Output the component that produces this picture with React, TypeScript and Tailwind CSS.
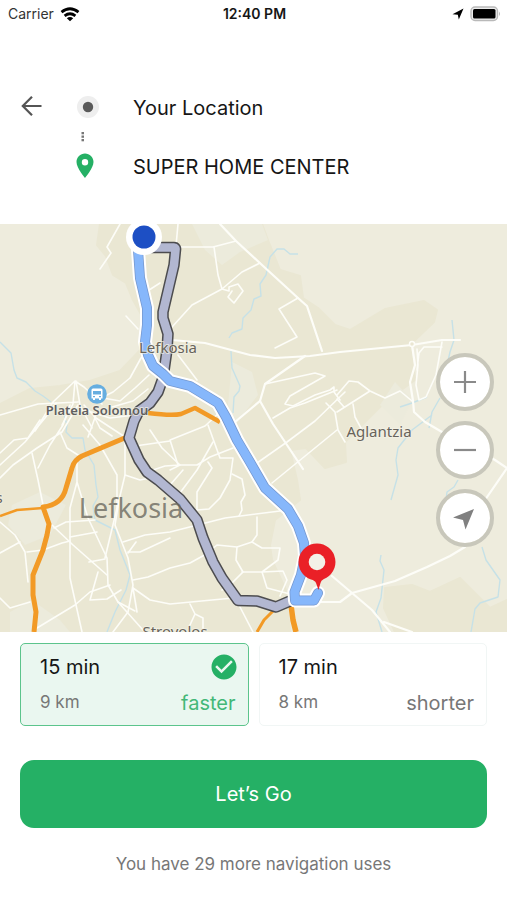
import React, { useState } from "react";
import { MdCheckCircle } from "react-icons/md";

interface RouteOption {
  id: string;
  time: string;
  distance: string;
  tag: string;
}

const ROUTES: RouteOption[] = [
  { id: "faster", time: "15 min", distance: "9 km", tag: "faster" },
  { id: "shorter", time: "17 min", distance: "8 km", tag: "shorter" },
];

// slightly darker built-up land
const LAND = [
  "M100 224L97 245L106 256L113 275L126 283L133 300L143 318L145 345L120 371L90 381L60 386L30 389L0 404V632H290L286 590L272 560L270 545L275 520L300 500L297 480L290 450L306 448L325 468L346 462L345 442L385 402L415 380L410 345L434 322L437 310L424 301L385 309L350 330L335 325L318 308L303 298L300 276L280 270L268 240L262 224Z",
  "M385 588L412 585L430 592L460 578L490 608L507 600V632H395L384 608Z",
];

// paler patches on top of the built-up land
const PATCHES = [
  "M192 224H262L268 240L240 252L222 265L205 250Z",
  "M232 362L252 372L258 395L235 425L228 405Z",
  "M12 505L40 492L66 505L50 535L25 545L8 525Z",
  "M10 612L32 600L60 620L70 632H10Z",
  "M395 382L412 400L400 425L380 405Z",
];

const STREAMS = [
  "M0 342L11 353L14 370L17 378L26 382L35 391L43 396L51 402",
  "M298 254L290 254L284 249L277 249L270 257L266 275L260 284L261 296L254 299L251 310L243 318L242 329L232 333L229 338",
  "M231 351L232 368L240 386L239 391L234 397L233 413",
  "M64 415L67 425L66 432L72 438L83 438L85 450L94 465L96 485L98 497L93 506L95 520L115 530L120 550L130 575L126 590L115 612L107 632",
  "M452 320L454 340L450 352L446 370",
  "M440 398L432 412L429 428M432 415L412 430L398 448L396 460L398 475L391 500",
  "M400 407L412 403L427 397",
  "M458 480L454 487L447 492L446 500",
  "M381 555L380 561L384 570L381 598L376 612L382 632",
  "M482 547L486 560L500 580L498 597L480 603L475 609L471 632",
];

const ROADS = [
  "M220 224L236 241L262 265L298 298L307 306L322 351",
  "M172 340L205 343L250 355L275 358L310 356L340 352L412 345L442 340L460 340",
  "M305 356L265 384L260 401L235 422",
  "M260 401L273 424L285 442L303 469",
  "M332 576L352 593L372 610L390 632M384 622L412 632",
  "M352 593L395 581L427 567L450 556L465 547",
  "M412 345L415 365L410 382L413 401L414 412L425 422L442 432L495 460L507 468L485 500",
  "M318 602H340L352 593",
];

const STREETS = [
  "M120 224L107 247L111 253L100 269",
  "M178 224L176 246M176 247H213L236 241",
  "M214 247L218 275L222 289M260 263L242 272L222 289L192 305L172 327",
  "M222 289L229 291L229 287L238 284L243 291L234 303L228 297L232 291",
  "M298 298L279 309L297 337L275 348",
  "M265 384L315 373L325 376L290 396L285 404L293 406L315 395L330 390L334 387L334 392L340 400",
  "M273 418L290 408L305 403L337 390M257 463L287 442L315 421L345 392M272 483L337 430",
  "M326 403L335 412L338 430L345 442",
  "M178 355L197 380M126 316L138 329M146 292L160 283",
  "M337 395L349 381L358 382L370 391L385 398L400 391L412 401M370 391L337 412M353 404L355 417L362 430M337 399L344 407",
  "M417 349L418 365L416 385L419 400L426 397L436 375L442 342M442 347H424L419 353L417 370",
  "M0 415L38 404L78 402M35 431L53 402L75 381L84 387L102 404M75 381L73 404L62 425M76 381L80 405L92 428",
  "M105 396L113 392L130 378L141 358L152 352M103 398L120 401L135 388L149 375M112 407L133 401L148 389",
  "M0 478L13 465L37 448L62 432L78 405M0 465L25 442L45 418L56 403M0 453L14 440L28 438L40 420M38 468L50 445L63 425L70 405",
  "M32 453L38 480L43 505M60 432L67 448L78 455M84 405L96 418L125 437M84 410L110 418L135 415",
  "M77 460V482L70 508V578L82 632M77 482L88 518L107 558L108 585L118 602L143 630",
  "M83 425L100 445L117 475V508L105 558M97 412L88 437M92 412L100 428L112 436",
  "M125 440V475L119 500L115 525L128 558L133 585L128 612L113 632M133 588L137 612",
  "M125 475L140 480L155 477M128 447L170 441",
  "M52 525L73 545L107 575M54 528L66 522L95 520M70 537L97 532M123 542L145 535L170 532L225 518L280 511",
  "M27 552L43 550L62 543L70 541M89 562L105 559M128 553L136 542",
  "M0 522L15 535L25 552L28 582M0 553L20 542M0 598L10 608L30 602M37 628L75 605L90 592L110 585",
  "M90 600L98 572M90 600L107 599L121 590M118 602L135 611",
  "M133 580L148 577L170 568L190 563L210 552M133 588L150 600L170 604L233 598M128 552L140 552L170 538",
  "M208 425L220 458H233L230 480L220 498L209 509L197 510V492L212 468L208 462",
  "M170 470L180 465L197 465L210 457L233 448M170 440L178 465M177 497L197 470L213 442M170 440L205 426L220 412",
  "M232 474L242 479L245 495L241 502L242 510L239 516",
  "M257 517V535L252 542L237 547L217 545L211 550M237 547L236 560L243 572L230 585L222 590",
  "M252 542L262 548L280 548L278 560L262 572L242 572M262 572L267 588L290 594M262 572L283 571L287 580L280 596",
  "M190 604L195 614L203 618V632M195 614L190 625M240 607L253 632",
  "M150 430L162 448L180 465M153 470L165 466L180 465M170 485L183 470",
];

const GREY_ROUTE =
  "M150 247.5H174Q176 247.500 175.500 250L174 265L163 312L163 318L168 334L167 350L163 378L158 392L150 403L139 411L134 421L129 438L139 460L147 472L158 480L180 499L197 520L203 538L213 562L222 578L238 600.500L257 601L276 607L290 601";
const BLUE_ROUTE =
  "M138 250L140 278L147 308V325L145 342L148 355L153 366L163 374L170 381L190 386L218 403L226 417L237 440L250 462L265 488L288 509L298 526L304 543L305 556L301 575L294.500 592L295 600.500H314L318 593";

function CityMap() {
  return (
    <svg
      viewBox="0 224 507 408"
      className="block w-full bg-[#eeecdd] font-['Noto_Sans',sans-serif]"
      role="img"
      aria-label="Map of Lefkosia with two routes"
    >
      <g fill="#eae7d3" stroke="#eae7d3" strokeWidth="2" strokeLinejoin="round">
        {LAND.map((d) => (
          <path key={d} d={d} />
        ))}
      </g>
      <g fill="#ecebdc">
        {PATCHES.map((d) => (
          <path key={d} d={d} />
        ))}
      </g>
      <g fill="none" stroke="#c6e1e7" strokeWidth="1.4" strokeLinejoin="round">
        {STREAMS.map((d) => (
          <path key={d} d={d} />
        ))}
      </g>
      <g fill="none" stroke="#fdfdf8" strokeLinejoin="round" strokeLinecap="round">
        {STREETS.map((d) => (
          <path key={d} d={d} strokeWidth="1.6" />
        ))}
        {ROADS.map((d) => (
          <path key={d} d={d} strokeWidth="2.2" />
        ))}
      </g>
      <circle cx="412" cy="344" r="2.5" fill="#eae6d1" stroke="#fdfdf8" strokeWidth="1.5" />

      {/* main orange roads */}
      <g fill="none" stroke="#f29a26" strokeLinejoin="round">
        <path d="M220 422L195 408L181 414Q172 416 148 413" strokeWidth="4.5" />
        <path
          d="M127 437L82 456Q74 460 72 468L66 488Q62 505 43 507L49 524L47 535L43 550L33 575V595L36 612L34 632"
          strokeWidth="5"
        />
        <path d="M0 516L17 510L43 508" strokeWidth="2.5" />
        <path d="M274 610L264 620L257 632" strokeWidth="3" />
        <path d="M291 605L293 620L296 632" strokeWidth="5.5" />
      </g>

      {/* routes */}
      <g fill="none" strokeLinejoin="round">
        <path d={GREY_ROUTE} stroke="#4c4c4f" strokeWidth="11.5" />
        <path d={GREY_ROUTE} stroke="#b2b7d1" strokeWidth="8.5" />
        <g strokeLinecap="round">
          <path d={BLUE_ROUTE} stroke="#ffffff" strokeWidth="14" />
          <path d={BLUE_ROUTE} stroke="#7597ce" strokeWidth="10" />
          <path d={BLUE_ROUTE} stroke="#86b7fb" strokeWidth="8.5" />
        </g>
      </g>

      {/* bus stop */}
      <circle cx="97" cy="394" r="9.8" fill="#66aee0" />
      <path
        d="M93 388.500H101Q102.500 388.500 102.500 390V398.500H101V400H99V398.500H95V400H93V398.500H91.500V390Q91.500 388.500 93 388.500ZM93 391V394.500H101V391ZM93 396V397.300H95V396ZM99 396V397.300H101V396Z"
        fill="#ffffff"
        fillRule="evenodd"
      />

      <g textAnchor="middle" fill="#67635b" strokeLinejoin="round" paintOrder="stroke">
        <text x="131" y="518" fontSize="27" fill="#6b695f" fillOpacity="0.8">
          Lefkosia
        </text>
        <g fontSize="15" stroke="#f4f2e6" strokeOpacity="0.7" strokeWidth="2">
          <text x="168" y="353">
            Lefkosia
          </text>
          <text x="379" y="437">
            Aglantzia
          </text>
          <text x="175" y="637">
            Strovolos
          </text>
          <text x="-1" y="503">
            s
          </text>
        </g>
        <text x="97" y="415" fontSize="13" fontWeight="600" fill="#5f5f60" stroke="#f4f2e6" strokeOpacity="0.7" strokeWidth="2">
          Plateia Solomou
        </text>
      </g>

      {/* start and destination */}
      <circle cx="144" cy="237" r="18" fill="#ffffff" />
      <circle cx="144" cy="237" r="11.500" fill="#1d4fc4" />
      <path
        d="M317 543.500A18.500 18.500 0 0 1 323.500 579.300Q321 580.500 320.500 583L318.500 590L316 583Q315 580.500 311 579.500A18.500 18.500 0 0 1 317 543.500Z"
        fill="#ea2027"
      />
      <circle cx="317" cy="562" r="8.300" fill="#f3f1e8" />
    </svg>
  );
}

interface MapButtonProps {
  label: string;
  children: React.ReactNode;
}

const MapButton: React.FC<MapButtonProps> = ({ label, children }) => (
  <button
    type="button"
    aria-label={label}
    className="flex h-[58px] w-[58px] cursor-pointer items-center justify-center rounded-full border-4 border-[#c8c7bb] bg-white bg-clip-padding text-[#8a8a8a]"
  >
    {children}
  </button>
);

export default function App() {
  const [selected, setSelected] = useState("faster");

  return (
    <div className="min-h-screen bg-white font-[Inter,sans-serif] text-[#161616]">
      {/* status bar */}
      <div className="grid h-7 grid-cols-3 items-center pr-1.5 pl-2 text-sm">
        <div className="flex items-center gap-1.5 text-[#333]">
          <span>Carrier</span>
          <svg viewBox="0 0 20 15" className="h-[15px] w-5" fill="none" stroke="#000" strokeWidth="2.8">
            <path d="M1.500 5.200Q10 -1.600 18.500 5.200" />
            <path d="M4.600 8.800Q10 4.600 15.400 8.800" />
            <path d="M10 14.200L6.800 11.200Q10 8.600 13.200 11.200Z" fill="#000" stroke="none" />
          </svg>
        </div>
        <span className="text-center font-semibold">12:40 PM</span>
        <div className="flex items-center justify-end gap-1.5">
          <svg viewBox="0 0 12 12" className="h-3 w-3">
            <path d="M11.500 0.500L6.800 11.500L5.800 6.800L0.500 6.200Z" fill="#000" />
          </svg>
          <svg viewBox="0 0 31 16" className="h-4 w-[31px]">
            <rect x="1" y="1" width="26.500" height="13.500" rx="4" fill="#ececec" stroke="#b9b9b9" strokeWidth="1.400" />
            <rect x="3" y="3" width="22.500" height="9.500" rx="1.500" fill="#000" />
            <path d="M29 5.500Q31 7.800 29 10Z" fill="#b9b9b9" />
          </svg>
        </div>
      </div>

      {/* from / to */}
      <header className="flex items-start px-5 pt-16 pb-[43px]">
        <button type="button" aria-label="Back" className="mt-[2px] cursor-pointer text-[#555]">
          <svg viewBox="0 0 24 24" className="h-6 w-6" fill="none" stroke="currentColor" strokeWidth="2.200">
            <path d="M21.500 12H3M12 2.700L2.800 12L12 21.300" />
          </svg>
        </button>
        <div className="ml-8 flex w-6 flex-col items-start">
          <svg viewBox="0 0 24 24" className="mt-1 h-6 w-6">
            <circle cx="12" cy="11" r="11" fill="#eeeeee" />
            <circle cx="12" cy="11" r="5.200" fill="#5a5a5a" />
          </svg>
          <svg viewBox="0 0 14 32" className="h-8 w-[14px]" fill="#777">
            <rect x="5.500" y="12" width="2.500" height="2.300" />
            <rect x="5.500" y="15.500" width="2.500" height="2.300" />
            <rect x="5.500" y="19" width="2.500" height="2.300" />
          </svg>
          <svg viewBox="0 0 18 25" className="mt-px h-[25px] w-[18px]">
            <path
              d="M9 0.500C4.300 0.500 0.500 4.200 0.500 9C0.500 15 9 25 9 25S17.500 15 17.500 9C17.500 4.200 13.700 0.500 9 0.500ZM9 6A3.200 3.200 0 1 1 9 12.400A3.200 3.200 0 1 1 9 6Z"
              fill="#25b065"
              fillRule="evenodd"
            />
          </svg>
        </div>
        <div className="ml-[33px] flex flex-col gap-[31px] pt-[2px] text-xl">
          <p>Your Location</p>
          <p>SUPER HOME CENTER</p>
        </div>
      </header>

      <main>
        <div className="relative">
          <CityMap />
          <div className="absolute top-[129px] right-[13px] flex flex-col gap-[10px]">
            <MapButton label="Zoom in">
              <svg viewBox="0 0 24 24" className="h-6 w-6" stroke="currentColor" strokeWidth="2.200">
                <path d="M1 12H23M12 1V23" />
              </svg>
            </MapButton>
            <MapButton label="Zoom out">
              <svg viewBox="0 0 24 24" className="h-6 w-6" stroke="currentColor" strokeWidth="2.200">
                <path d="M1 12H23" />
              </svg>
            </MapButton>
            <MapButton label="My location">
              <svg viewBox="0 0 24 24" className="h-6 w-6" fill="#808080">
                <path d="M21 3L12.500 23.500L10 14L0 11.500Z" />
              </svg>
            </MapButton>
          </div>
        </div>

        <div className="grid grid-cols-2 gap-[10px] px-5 pt-[11px]">
          {ROUTES.map((route) => {
            const active = route.id === selected;
            return (
              <button
                key={route.id}
                type="button"
                aria-pressed={active}
                onClick={() => setSelected(route.id)}
                className={`flex h-[83px] cursor-pointer flex-col justify-between rounded-[5px] border pt-[9px] pr-3 pb-2 pl-[19px] ${
                  active ? "border-[#5cc48c] bg-[#eaf7f0]" : "border-[#f1f6f5] bg-white"
                }`}
              >
                <span className="flex h-7 w-full items-center justify-between text-xl">
                  {route.time}
                  {active && <MdCheckCircle className="-mr-[3px] h-[30px] w-[30px] text-[#25b065]" />}
                </span>
                <span className="flex h-7 w-full items-center justify-between">
                  <span className="text-[17px] text-[#777]">{route.distance}</span>
                  <span className={active ? "text-xl text-[#43b878]" : "text-xl text-[#777]"}>{route.tag}</span>
                </span>
              </button>
            );
          })}
        </div>

        <div className="px-5 pt-[34px]">
          <button
            type="button"
            className="h-[68px] w-full cursor-pointer rounded-[14px] bg-[#25b065] text-xl text-white"
          >
            Let’s Go
          </button>
          <p className="pt-6 text-center text-[17px] text-[#777]">You have 29 more navigation uses</p>
        </div>
      </main>
    </div>
  );
}
